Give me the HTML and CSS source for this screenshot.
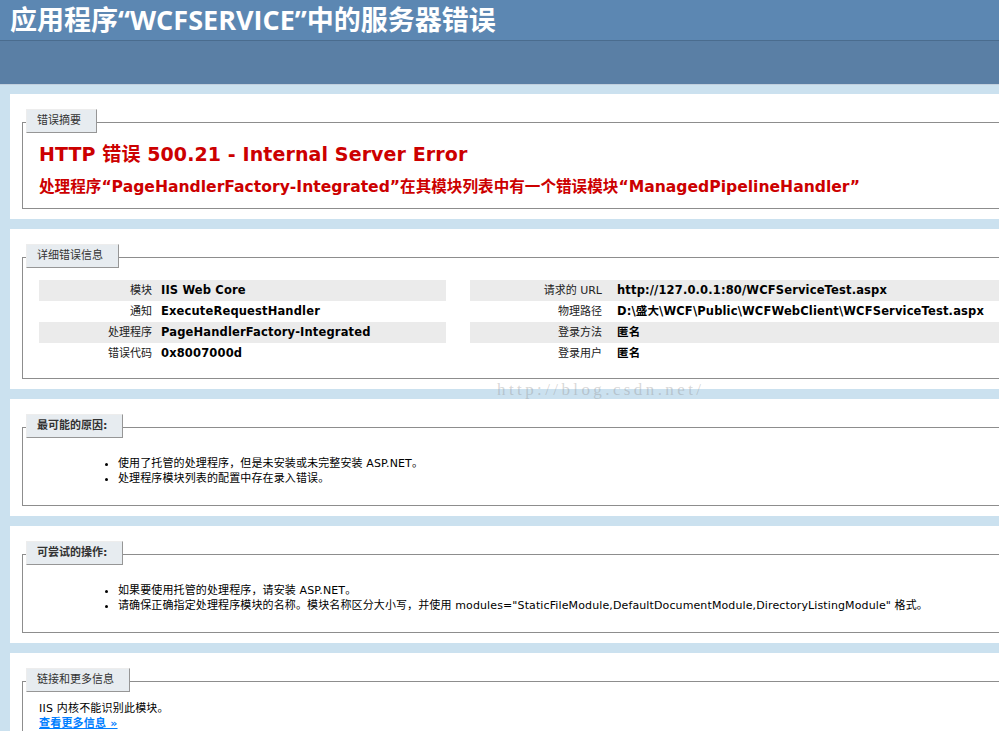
FILE: index.html
```html
<!DOCTYPE html>
<html lang="zh-CN">
<head>
<meta charset="utf-8">
<title>IIS 8.5 详细错误 - 500.21 - Internal Server Error</title>
<link rel="stylesheet" href="styles.css">
</head>
<body>
<div class="header"><h1>应用程序“WCFSERVICE”中的服务器错误</h1></div>
<div class="server-version"></div>
<div class="content">
  <div class="box box-first">
    <div class="fs">
      <div class="legend">错误摘要</div>
      <h2>HTTP 错误 500.21 - Internal Server Error</h2>
      <h3>处理程序“PageHandlerFactory-Integrated”在其模块列表中有一个错误模块“ManagedPipelineHandler”</h3>
    </div>
  </div>

  <div class="box">
    <div class="fs">
      <div class="legend">详细错误信息</div>
      <div class="details">
        <table class="info info-left">
          <tr class="alt"><th>模块</th><td>IIS Web Core</td></tr>
          <tr><th>通知</th><td>ExecuteRequestHandler</td></tr>
          <tr class="alt"><th>处理程序</th><td>PageHandlerFactory-Integrated</td></tr>
          <tr><th>错误代码</th><td>0x8007000d</td></tr>
        </table>
        <table class="info info-right">
          <tr class="alt"><th>请求的 URL</th><td>http://127.0.0.1:80/WCFServiceTest.aspx</td></tr>
          <tr><th>物理路径</th><td>D:\盛大\WCF\Public\WCFWebClient\WCFServiceTest.aspx</td></tr>
          <tr class="alt"><th>登录方法</th><td>匿名</td></tr>
          <tr><th>登录用户</th><td>匿名</td></tr>
        </table>
      </div>
    </div>
  </div>

  <div class="box">
    <div class="fs">
      <div class="legend legend-bold">最可能的原因:</div>
      <ul class="list">
        <li>使用了托管的处理程序，但是未安装或未完整安装 ASP.NET。</li>
        <li>处理程序模块列表的配置中存在录入错误。</li>
      </ul>
    </div>
  </div>

  <div class="box">
    <div class="fs">
      <div class="legend legend-bold">可尝试的操作:</div>
      <ul class="list">
        <li>如果要使用托管的处理程序，请安装 ASP.NET。</li>
        <li>请确保正确指定处理程序模块的名称。模块名称区分大小写，并使用 modules="StaticFileModule,DefaultDocumentModule,DirectoryListingModule" 格式。</li>
      </ul>
    </div>
  </div>

  <div class="box">
    <div class="fs">
      <div class="legend">链接和更多信息</div>
      <p class="more">IIS 内核不能识别此模块。<br><a href="#" class="more-link">查看更多信息 »</a></p>
    </div>
  </div>
</div>
<div class="watermark">http://blog.csdn.net/</div>
</body>
</html>
```

FILE: styles.css
```css
html, body {
  overflow: hidden;
}
body {
  margin: 0;
  background: #CBE1EF;
  font-family: "DejaVu Sans", "Noto Sans CJK SC", sans-serif;
  font-size: 11px;
  color: #000;
  position: relative;
  min-height: 731px;
}
.header {
  height: 28px;
  padding: 6px 10px;
  background: #5C87B2;
}
.header h1 {
  margin: 0;
  font-family: "Open Sans", "Noto Sans CJK SC", sans-serif;
  font-weight: 700;
  font-size: 27px;
  line-height: 28px;
  color: #fff;
  white-space: nowrap;
  letter-spacing: 0;
}
.server-version {
  height: 43px;
  background: #5A7FA5;
  border-top: 1px solid #4A6C8E;
  border-bottom: 1px solid #C1CFDD;
}
.content {
  padding-left: 10px;
}
.box {
  width: 1040px;
  background: #fff;
  margin-top: 10px;
  padding: 10px 12px;
}
.box-first {
  margin-top: 9px;
}
.fs {
  margin-top: 18px;
  border: 1px solid #8d8d8d;
  padding: 0 16px;
}
.legend {
  width: max-content;
  margin: -14px 0 0 -13px;
  padding: 4px 15px 4px 10px;
  line-height: 14px;
  background: #E7ECF0;
  border-top: 1px solid #EDEDED;
  border-left: 1px solid #EDEDED;
  border-right: 1px solid #969696;
  border-bottom: 1px solid #969696;
  color: #333;
  font-size: 11px;
  font-weight: normal;
}
.legend-bold {
  font-weight: bold;
}
h2 {
  margin: 10px 0 0;
  font-size: 19px;
  line-height: 23px;
  color: #CC0000;
  font-weight: bold;
  white-space: nowrap;
  letter-spacing: 0.1px;
}
h3 {
  margin: 11px 0 10px;
  font-size: 15.6px;
  line-height: 21px;
  color: #CC0000;
  font-weight: bold;
  white-space: nowrap;
}
.details {
  display: flex;
  gap: 24px;
  margin: 12px 0 14px;
}
.info {
  border-collapse: collapse;
  border: none;
}
.info-left {
  width: 407px;
}
.info-right {
  flex: 1;
}
.info th, .info td {
  padding: 3px 0;
  line-height: 15px;
  height: 15px;
  vertical-align: top;
  white-space: nowrap;
}
.info th {
  text-align: right;
  font-weight: normal;
  color: #222;
}
.info td {
  font-weight: bold;
  font-size: 11.5px;
  letter-spacing: 0.15px;
  text-align: left;
}
.info-left th {
  width: 113px;
  padding-right: 9px;
}
.info-right th {
  width: 132px;
  padding-right: 15px;
}
.info tr.alt th, .info tr.alt td {
  background: #EBEBEB;
}
.list {
  margin: 18px 0 19px;
  padding-left: 79px;
  line-height: 15px;
  list-style: disc;
  letter-spacing: 0.12px;
}
.list li {
  white-space: nowrap;
}
.more {
  margin: 9px 0 10px;
  line-height: 15px;
  letter-spacing: 0.2px;
}
.more-link {
  color: #007EFF;
  font-weight: bold;
  text-decoration: underline;
}
.watermark {
  position: absolute;
  left: 497px;
  top: 380px;
  font-family: "Liberation Serif", serif;
  font-size: 17px;
  letter-spacing: 3.4px;
  color: rgba(140, 140, 140, 0.35);
  pointer-events: none;
}
```
